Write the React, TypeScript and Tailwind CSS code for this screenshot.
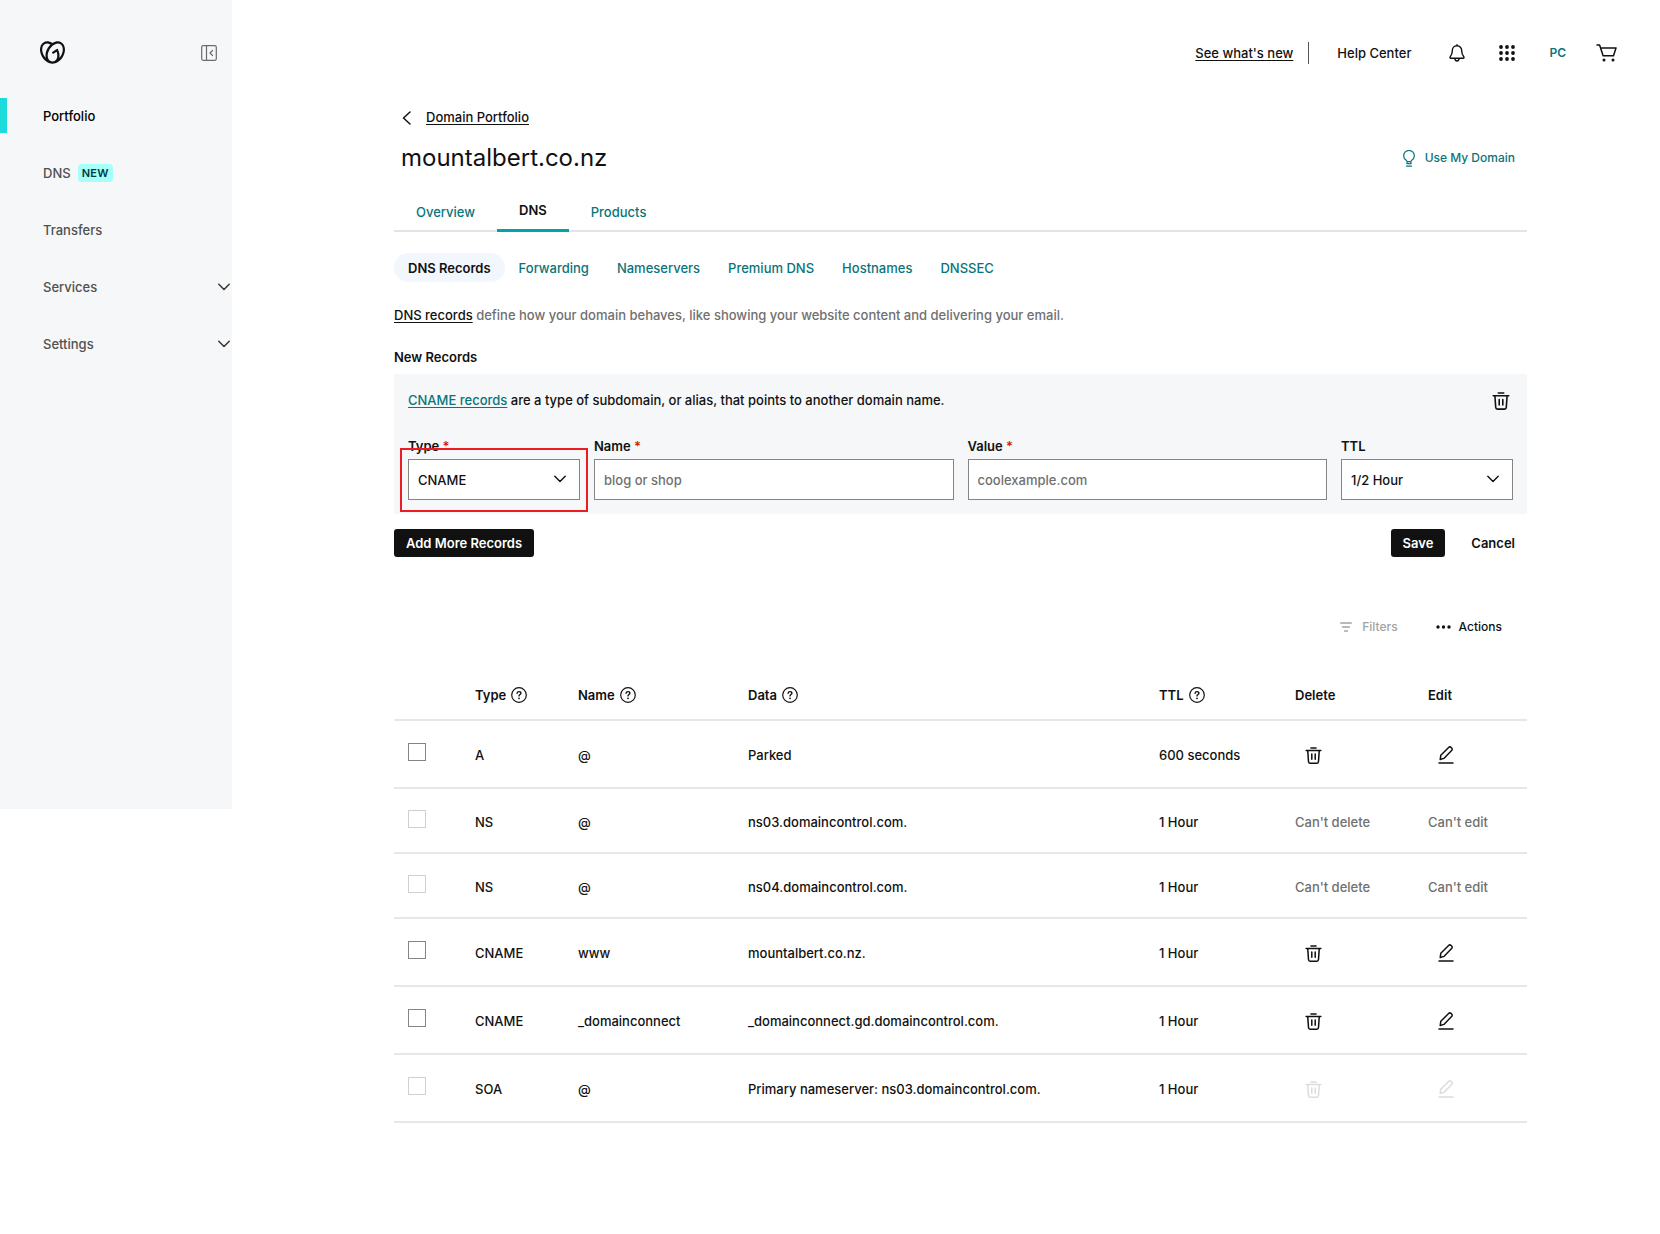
import React from "react";
import { SiGodaddy } from "react-icons/si";

type IconProps = { className?: string };

function ChevronDown({ className }: IconProps) {
  return (
    <svg viewBox="0 0 12 8" className={className} fill="none" stroke="currentColor" strokeWidth="1.4" strokeLinecap="round" strokeLinejoin="round" aria-hidden="true">
      <path d="M0.8 1.2 6 6.6l5.2-5.4" />
    </svg>
  );
}

function TrashIcon({ className }: IconProps) {
  return (
    <svg viewBox="0 0 18 18" className={className} fill="none" stroke="currentColor" strokeWidth="1.6" strokeLinecap="round" strokeLinejoin="round" aria-hidden="true">
      <path d="M6.3 1h5.400M1.200 3.800h15.600M2.900 3.800l.8 11.500c.1 1.200.7 1.800 1.700 1.800h7.200c1 0 1.600-.6 1.700-1.800l.8-11.500" />
      <path d="M7.200 7.500v5.500M10.800 7.500v5.500" />
    </svg>
  );
}

function EditIcon({ className }: IconProps) {
  return (
    <svg viewBox="0 0 16 18" className={className} fill="none" stroke="currentColor" strokeWidth="1.5" strokeLinecap="round" strokeLinejoin="round" aria-hidden="true">
      <path d="M2.200 13.500l.6-4.200 7.800-7.800c.8-.8 1.700-.8 2.500 0l.5.500c.8.800.8 1.700 0 2.500l-7.700 7.900z" />
      <path d="M1 17h14" />
    </svg>
  );
}

function HelpIcon({ className }: IconProps) {
  return (
    <svg viewBox="0 0 16 16" className={className} fill="none" stroke="currentColor" strokeWidth="1.2" strokeLinecap="round" aria-hidden="true">
      <circle cx="8" cy="8" r="7.300" />
      <path d="M6.100 6.300c.1-1 .8-1.700 1.900-1.700s1.900.7 1.900 1.600c0 1.300-1.900 1.300-1.900 2.700" strokeWidth="1.400" />
      <circle cx="8" cy="11.300" r=".9" fill="currentColor" stroke="none" />
    </svg>
  );
}

function CollapseIcon({ className }: IconProps) {
  return (
    <svg viewBox="0 0 16 16" className={className} fill="none" stroke="currentColor" strokeWidth="1.200" strokeLinecap="round" strokeLinejoin="round" aria-hidden="true">
      <rect x=".7" y=".7" width="14.600" height="14.600" rx="1.500" />
      <path d="M5.500 1v14M11.500 5.500 9 8l2.500 2.500" />
    </svg>
  );
}

function BellIcon({ className }: IconProps) {
  return (
    <svg viewBox="0 0 16 18" className={className} fill="none" stroke="currentColor" strokeWidth="1.400" strokeLinecap="round" strokeLinejoin="round" aria-hidden="true">
      <path d="M8 1.800c-2.900 0-4.700 2.200-4.700 4.900 0 3.300-.7 4.400-2.100 6.100-.5.700-.2 1.500.6 1.500h12.400c.8 0 1.100-.8.600-1.500-1.400-1.700-2.100-2.800-2.100-6.100 0-2.700-1.800-4.900-4.700-4.900zM8 .8v1M5.800 14.500c.3 1.500 1.100 2.500 2.200 2.500s1.900-1 2.200-2.500" />
    </svg>
  );
}

function GridIcon({ className }: IconProps) {
  return (
    <svg viewBox="0 0 16 16" className={className} fill="currentColor" aria-hidden="true">
      {[2, 8, 14].map((cy) => [2, 8, 14].map((cx) => <circle key={`${cx}-${cy}`} cx={cx} cy={cy} r="1.900" />))}
    </svg>
  );
}

function CartIcon({ className }: IconProps) {
  return (
    <svg viewBox="0 0 21 18" className={className} fill="none" stroke="currentColor" strokeWidth="1.500" strokeLinecap="round" strokeLinejoin="round" aria-hidden="true">
      <path d="M1 1h2.600l3.500 10.800h10.400L20 4H4.600" />
      <circle cx="8" cy="16" r="1.500" fill="currentColor" stroke="none" />
      <circle cx="17" cy="16" r="1.500" fill="currentColor" stroke="none" />
    </svg>
  );
}

function BulbIcon({ className }: IconProps) {
  return (
    <svg viewBox="0 0 12 17" className={className} fill="none" stroke="currentColor" strokeWidth="1.200" strokeLinecap="round" strokeLinejoin="round" aria-hidden="true">
      <path d="M4 11.600c0-.6-.3-1-1-1.500A5.300 5.300 0 1 1 9 10.100c-.7.500-1 .9-1 1.500v2.100H4zM4 11.600h4M3.500 16.200h5" />
    </svg>
  );
}

const navItems = [
  { label: "Portfolio", active: true },
  { label: "DNS", badge: "NEW" },
  { label: "Transfers" },
  { label: "Services", expandable: true },
  { label: "Settings", expandable: true },
];

const subTabs = ["Forwarding", "Nameservers", "Premium DNS", "Hostnames", "DNSSEC"];

type DnsRecord = {
  type: string;
  name: string;
  data: string;
  ttl: string;
  state: "open" | "locked" | "disabled";
};

const records: DnsRecord[] = [
  { type: "A", name: "@", data: "Parked", ttl: "600 seconds", state: "open" },
  { type: "NS", name: "@", data: "ns03.domaincontrol.com.", ttl: "1 Hour", state: "locked" },
  { type: "NS", name: "@", data: "ns04.domaincontrol.com.", ttl: "1 Hour", state: "locked" },
  { type: "CNAME", name: "www", data: "mountalbert.co.nz.", ttl: "1 Hour", state: "open" },
  { type: "CNAME", name: "_domainconnect", data: "_domainconnect.gd.domaincontrol.com.", ttl: "1 Hour", state: "open" },
  { type: "SOA", name: "@", data: "Primary nameserver: ns03.domaincontrol.com.", ttl: "1 Hour", state: "disabled" },
];

function Sidebar() {
  return (
    <aside className="w-[232px] min-h-[809px] shrink-0 self-start bg-[#f5f7f8]">
      <div className="flex h-[87px] items-center justify-between pt-[18px] pl-10 pr-[15px]">
        <a href="#" aria-label="Home" className="text-[#111]">
          <SiGodaddy className="size-[25px]" />
        </a>
        <button type="button" aria-label="Collapse sidebar" className="text-[#6b6b6b]">
          <CollapseIcon className="size-4" />
        </button>
      </div>
      <nav>
        {navItems.map((item) => (
          <a key={item.label} href="#" className="flex h-[57px] items-center">
            <span className={item.active ? "h-[35px] w-[7px] bg-[#1bdbdb]" : "h-[35px] w-[7px]"} />
            <span className={item.active ? "ml-9 text-black" : "ml-9 text-[#505050]"}>{item.label}</span>
            {item.badge && (
              <span className="ml-[7px] flex h-[18px] items-center rounded bg-[#a6fff8] px-1 text-[11px] font-semibold tracking-wide text-[#003a40]">
                {item.badge}
              </span>
            )}
            {item.expandable && <ChevronDown className="ml-auto mr-0.5 h-2 w-3 text-[#333]" />}
          </a>
        ))}
      </nav>
    </aside>
  );
}

function TopBar() {
  return (
    <header className="flex h-[106px] items-center justify-end pr-[43px]">
      <a href="#" className="underline underline-offset-2">See what's new</a>
      <span className="ml-[15px] h-[22px] w-px bg-[#555]" />
      <a href="#" className="ml-7">Help Center</a>
      <button type="button" aria-label="Notifications" className="ml-[38px]">
        <BellIcon className="h-[18px] w-4" />
      </button>
      <button type="button" aria-label="Apps" className="ml-[34px]">
        <GridIcon className="size-4" />
      </button>
      <button type="button" className="ml-[34px] text-xs font-semibold text-[#09757a]">PC</button>
      <button type="button" aria-label="Cart" className="ml-[30px]">
        <CartIcon className="h-[18px] w-[21px]" />
      </button>
    </header>
  );
}

function FieldLabel({ htmlFor, text, required }: { htmlFor: string; text: string; required?: boolean }) {
  return (
    <label htmlFor={htmlFor} className="mb-[3px] block font-semibold">
      {text}
      {required && <span className="text-[#db1802]"> *</span>}
    </label>
  );
}

function SelectField({ id, value }: { id: string; value: string }) {
  return (
    <div className="relative">
      <select id={id} defaultValue={value} className="block h-[41px] w-full appearance-none border border-[#858585] bg-white px-[9px]">
        <option>{value}</option>
      </select>
      <ChevronDown className="pointer-events-none absolute top-4 right-[14px] h-2 w-3" />
    </div>
  );
}

function NewRecordForm() {
  return (
    <form>
      <div className="mt-[7px] bg-[#f5f7f8] p-[14px]">
        <div className="flex h-6 items-center justify-between">
          <p>
            <a href="#" className="text-[#09757a] underline underline-offset-2">CNAME records</a> are a type of subdomain, or alias, that
            points to another domain name.
          </p>
          <button type="button" aria-label="Remove record" className="mt-0.5 mr-[3px]">
            <TrashIcon className="size-[18px]" />
          </button>
        </div>
        <div className="mt-6 grid grid-cols-[172px_1fr_1fr_172px] gap-[14px]">
          <div className="relative">
            <FieldLabel htmlFor="type" text="Type" required />
            <SelectField id="type" value="CNAME" />
            <span className="pointer-events-none absolute top-3 -right-2 -bottom-3 -left-2 border-2 border-[#ed1c24]" />
          </div>
          <div>
            <FieldLabel htmlFor="name" text="Name" required />
            <input id="name" type="text" placeholder="blog or shop" className="block h-[41px] w-full border border-[#858585] bg-white px-[9px] placeholder:text-[#707070]" />
          </div>
          <div>
            <FieldLabel htmlFor="value" text="Value" required />
            <input id="value" type="text" placeholder="coolexample.com" className="block h-[41px] w-full border border-[#858585] bg-white px-[9px] placeholder:text-[#707070]" />
          </div>
          <div>
            <FieldLabel htmlFor="ttl" text="TTL" />
            <SelectField id="ttl" value="1/2 Hour" />
          </div>
        </div>
      </div>
      <div className="mt-[15px] flex items-center">
        <button type="button" className="h-7 rounded-[3px] bg-[#111] px-3 font-semibold text-white">Add More Records</button>
        <button type="button" className="ml-auto h-7 rounded-[3px] bg-[#111] px-3 font-semibold text-white">Save</button>
        <button type="button" className="mr-3 ml-[26px] h-7 font-semibold">Cancel</button>
      </div>
    </form>
  );
}

function HeaderCell({ text, help }: { text: string; help?: boolean }) {
  return (
    <th scope="col" className="h-[50px] border-b-2 border-[#e3e8ec] text-left font-semibold">
      <span className="flex items-center gap-[5px]">
        {text}
        {help && <HelpIcon className="size-4" />}
      </span>
    </th>
  );
}

function RecordsTable() {
  return (
    <table className="mt-[30px] w-full table-fixed border-separate border-spacing-0">
      <colgroup>
        <col className="w-[81px]" />
        <col className="w-[103px]" />
        <col className="w-[170px]" />
        <col />
        <col className="w-[136px]" />
        <col className="w-[133px]" />
        <col className="w-[99px]" />
      </colgroup>
      <thead>
        <tr>
          <td className="border-b-2 border-[#e3e8ec]" />
          <HeaderCell text="Type" help />
          <HeaderCell text="Name" help />
          <HeaderCell text="Data" help />
          <HeaderCell text="TTL" help />
          <HeaderCell text="Delete" />
          <HeaderCell text="Edit" />
        </tr>
      </thead>
      <tbody>
        {records.map((record, index) => {
          const locked = record.state === "locked";
          const iconColor = record.state === "disabled" ? "ml-[10px] block text-[#dcdcdc]" : "ml-[10px] block text-[#111]";
          return (
            <tr key={index} className={locked ? "h-[65px] *:border-b-2 *:border-[#e3e8ec]" : "h-[68px] *:border-b-2 *:border-[#e3e8ec]"}>
              <td className="pb-1 pl-[14px]">
                <input
                  type="checkbox"
                  aria-label={`Select ${record.type} ${record.data}`}
                  disabled={record.state !== "open"}
                  className="block size-[18px] appearance-none border border-[#858585] bg-white disabled:border-[#d0d0d0]"
                />
              </td>
              <td className="pt-0.5">{record.type}</td>
              <td className="pt-0.5">{record.name}</td>
              <td className="pt-0.5">{record.data}</td>
              <td className="pt-0.5">{record.ttl}</td>
              <td className="pt-0.5">
                {locked ? (
                  <span className="text-[#707070]">Can't delete</span>
                ) : (
                  <button type="button" aria-label="Delete" disabled={record.state === "disabled"} className={iconColor}>
                    <TrashIcon className="size-[17px]" />
                  </button>
                )}
              </td>
              <td className="pt-0.5">
                {locked ? (
                  <span className="text-[#707070]">Can't edit</span>
                ) : (
                  <button type="button" aria-label="Edit" disabled={record.state === "disabled"} className={iconColor}>
                    <EditIcon className="h-[18px] w-4" />
                  </button>
                )}
              </td>
            </tr>
          );
        })}
      </tbody>
    </table>
  );
}

export default function App() {
  return (
    <div className="flex min-h-screen bg-white font-['Inter',sans-serif] text-[13px] leading-5 font-medium text-[#111]">
      <Sidebar />
      <div className="min-w-0 flex-1">
        <TopBar />
        <main className="pr-[133px] pl-[162px]">
          <a href="#" className="flex h-6 w-fit items-center pl-2">
            <svg viewBox="0 0 9 14" className="h-[14px] w-[9px]" fill="none" stroke="currentColor" strokeWidth="1.500" strokeLinecap="round" strokeLinejoin="round" aria-hidden="true">
              <path d="M8 1 1.500 7 8 13" />
            </svg>
            <span className="mb-0.5 ml-[15px] underline underline-offset-2">Domain Portfolio</span>
          </a>
          <div className="mt-2 flex h-10 items-center justify-between pr-3 pl-[7px]">
            <h1 className="text-2xl font-normal">mountalbert.co.nz</h1>
            <a href="#" className="flex items-center gap-[10px] text-xs text-[#09757a]">
              <BulbIcon className="h-[17px] w-3" />
              Use My Domain
            </a>
          </div>
          <nav className="mt-[13px] flex h-[41px] items-stretch border-b-2 border-[#e4e4e4]">
            <a href="#" className="flex items-center px-[22px] pt-0.5 text-[#09757a]">Overview</a>
            <a href="#" className="-mb-0.5 flex items-center border-b-3 border-[#00a4a6] px-[22px] font-semibold">DNS</a>
            <a href="#" className="flex items-center px-[22px] pt-0.5 text-[#09757a]">Products</a>
          </nav>
          <nav className="mt-[21px] flex">
            <a href="#" className="flex h-[29px] items-center rounded-full bg-[#f2f6fd] px-[14px] font-semibold">DNS Records</a>
            {subTabs.map((tab) => (
              <a key={tab} href="#" className="flex h-[29px] items-center px-[14px] text-[#09757a]">{tab}</a>
            ))}
          </nav>
          <p className="mt-[23px] text-[#707070]">
            <a href="#" className="text-[#111] underline underline-offset-2">DNS records</a> define how your domain behaves, like
            showing your website content and delivering your email.
          </p>
          <h2 className="mt-[22px] font-semibold">New Records</h2>
          <NewRecordForm />
          <div className="mt-14 flex h-7 items-center justify-end pr-[25px] text-xs">
            <button type="button" disabled className="flex items-center gap-[10px] text-[#a3a3a3]">
              <svg viewBox="0 0 12 10" className="h-[10px] w-3" fill="none" stroke="currentColor" strokeWidth="1.300" strokeLinecap="round" aria-hidden="true">
                <path d="M.7 1h10.600M2.500 5h7M4.500 9h3" />
              </svg>
              Filters
            </button>
            <button type="button" className="ml-[38px] flex items-center gap-2">
              <svg viewBox="0 0 15 4" className="h-1 w-[15px]" fill="currentColor" aria-hidden="true">
                <circle cx="2" cy="2" r="1.700" />
                <circle cx="7.500" cy="2" r="1.700" />
                <circle cx="13" cy="2" r="1.700" />
              </svg>
              Actions
            </button>
          </div>
          <RecordsTable />
        </main>
      </div>
    </div>
  );
}
